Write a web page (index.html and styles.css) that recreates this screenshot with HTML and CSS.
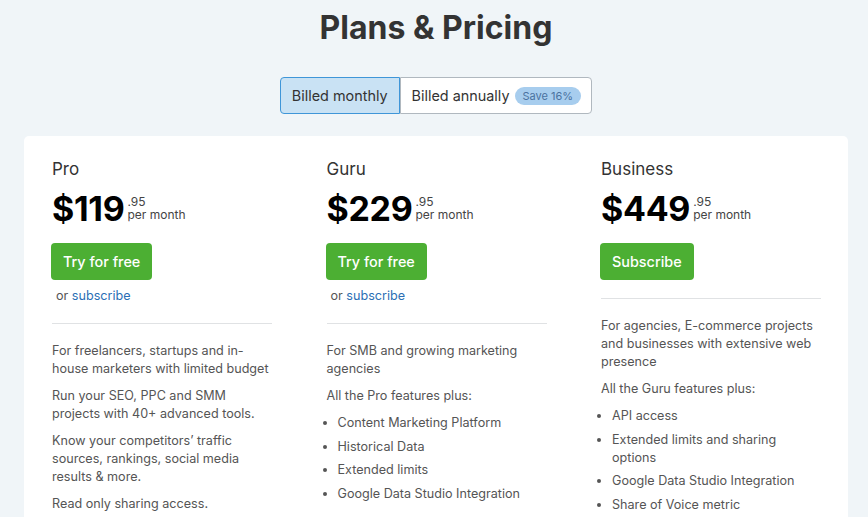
FILE: index.html
```html
<!DOCTYPE html>
<html lang="en">
<head>
    <meta charset="UTF-8">
    <meta name="viewport" content="width=device-width, initial-scale=1.0">
    <title>Plans &amp; Pricing</title>
    <link rel="stylesheet" href="styles.css">
</head>
<body>
    <div class="page">
        <h1 class="title">Plans &amp; Pricing</h1>
        <div class="billing">
            <button class="billing-option active">Billed monthly</button>
            <button class="billing-option">Billed annually <span class="save">Save 16%</span></button>
        </div>
        <div class="plans">
            <div class="plan">
                <div class="plan-name">Pro</div>
                <div class="price">
                    <span class="amount">$119</span>
                    <span class="price-side"><span class="cents">.95</span><span class="period">per month</span></span>
                </div>
                <a class="cta" href="#">Try for free</a>
                <div class="alt">or <a href="#">subscribe</a></div>
                <div class="plan-body">
                    <p>For freelancers, startups and in-house marketers with limited budget</p>
                    <p>Run your SEO, PPC and SMM projects with 40+ advanced tools.</p>
                    <p>Know your competitors’ traffic sources, rankings, social media results &amp; more.</p>
                    <p>Read only sharing access.</p>
                </div>
            </div>
            <div class="plan">
                <div class="plan-name">Guru</div>
                <div class="price">
                    <span class="amount">$229</span>
                    <span class="price-side"><span class="cents">.95</span><span class="period">per month</span></span>
                </div>
                <a class="cta" href="#">Try for free</a>
                <div class="alt">or <a href="#">subscribe</a></div>
                <div class="plan-body">
                    <p>For SMB and growing marketing agencies</p>
                    <p>All the Pro features plus:</p>
                    <ul>
                        <li>Content Marketing Platform</li>
                        <li>Historical Data</li>
                        <li>Extended limits</li>
                        <li>Google Data Studio Integration</li>
                    </ul>
                </div>
            </div>
            <div class="plan">
                <div class="plan-name">Business</div>
                <div class="price">
                    <span class="amount">$449</span>
                    <span class="price-side"><span class="cents">.95</span><span class="period">per month</span></span>
                </div>
                <a class="cta" href="#">Subscribe</a>
                <div class="plan-body">
                    <p>For agencies, E-commerce projects and businesses with extensive web presence</p>
                    <p>All the Guru features plus:</p>
                    <ul>
                        <li>API access</li>
                        <li>Extended limits and sharing options</li>
                        <li>Google Data Studio Integration</li>
                        <li>Share of Voice metric</li>
                    </ul>
                </div>
            </div>
        </div>
    </div>
</body>
</html>
```

FILE: styles.css
```css
body {
    margin: 0;
    padding: 0;
    background-color: #f0f5f8;
    font-family: Inter, "Noto Sans", sans-serif;
    color: #333;
    overflow: hidden;
}
.page {
    padding: 10px 20px 0 24px;
}
.title {
    margin: 0;
    text-align: center;
    font-size: 32px;
    font-weight: 700;
    line-height: 36px;
    color: #333;
}
.billing {
    display: flex;
    justify-content: center;
    margin: 31px 0 22px;
}
.billing-option {
    display: flex;
    align-items: center;
    gap: 6px;
    height: 37px;
    padding: 0 11px;
    background: #fff;
    border: 1px solid #b0b8bf;
    font-family: inherit;
    font-size: 14.4px;
    color: #333;
    cursor: pointer;
}
.billing-option:first-child {
    border-radius: 4px 0 0 4px;
    border-right: none;
}
.billing-option:last-child {
    border-radius: 0 4px 4px 0;
    padding-right: 10px;
    gap: 5px;
}
.billing-option.active {
    background: #c9e2f4;
    border-color: #3f96d8;
    border-right: 1px solid #3f96d8;
}
.save {
    background: #a7cdee;
    color: #4a72a0;
    font-size: 11px;
    line-height: 18px;
    padding: 0 8px;
    border-radius: 9px;
}
.plans {
    display: grid;
    grid-template-columns: repeat(3, 220px);
    column-gap: 54.5px;
    background: #fff;
    border-radius: 5px;
    padding: 23px 26px 0 28px;
    height: 400px;
}
.plan {
    display: flex;
    flex-direction: column;
}
.plan-name {
    font-size: 17px;
    line-height: 20px;
}
.price {
    display: flex;
    align-items: flex-start;
    margin-top: 12px;
}
.amount {
    font-size: 34px;
    font-weight: 700;
    line-height: 36px;
    color: #000;
    letter-spacing: -0.3px;
}
.price-side {
    display: flex;
    flex-direction: column;
    margin: 4px 0 0 3px;
    font-size: 12px;
    line-height: 13px;
    color: #444;
}
.cta {
    display: inline-block;
    align-self: start;
    margin-top: 16px;
    margin-left: -1px;
    padding: 0 12px;
    height: 37px;
    line-height: 37px;
    background: #4caf33;
    color: #fff;
    border-radius: 4px;
    font-size: 14.4px;
    font-weight: 500;
    text-decoration: none;
}
.alt {
    margin: 7px 0 0 4px;
    font-size: 12.6px;
    line-height: 18px;
    color: #555;
}
.alt a {
    color: #2b6fb5;
    text-decoration: none;
}
.plan-body {
    margin-top: 18px;
    border-top: 1px solid #e0e2e4;
    padding-top: 18px;
    font-size: 12.6px;
    line-height: 18px;
    color: #555;
}
.plan-body p {
    margin: 0 0 9px;
}
.plan-body ul {
    margin: 0;
    padding-left: 11px;
}
.plan-body li {
    margin-bottom: 5.5px;
}
```
